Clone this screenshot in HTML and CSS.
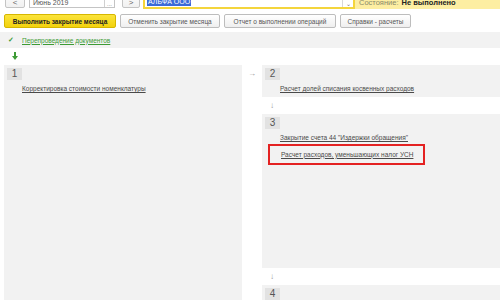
FILE: index.html
```html
<!DOCTYPE html>
<html lang="ru">
<head>
<meta charset="utf-8">
<link rel="stylesheet" href="styles.css">
</head>
<body>
<div class="top">
  <div class="navbtn prev">&lt;</div>
  <div class="field date"><span class="val">Июнь 2019</span><div class="dots">...</div></div>
  <div class="navbtn next">&gt;</div>
  <div class="org"><span class="sel">АЛЬФА ООО</span><div class="dd">⌄</div></div>
  <div class="state"><span class="lbl">Состояние:</span> <b>Не выполнено</b></div>
</div>
<div class="actions">
  <div class="btn primary">Выполнить закрытие месяца</div>
  <div class="btn w100">Отменить закрытие месяца</div>
  <div class="btn w112">Отчет о выполнении операций</div>
  <div class="btn w71">Справки - расчеты</div>
</div>
<div class="band">
  <span class="check">✓</span>
  <a class="glink">Перепроведение документов</a>
</div>
<div class="garrow">
  <svg width="6" height="8" viewBox="0 0 6 8"><path d="M2 0h2v4h2L3 8 0 4h2z" fill="#3d9b35"/></svg>
</div>
<div class="main">
  <div class="step left">
    <div class="badge">1</div>
    <a class="link">Корректировка стоимости номенклатуры</a>
  </div>
  <div class="harrow">→</div>
  <div class="col">
    <div class="step s2">
      <div class="badge">2</div>
      <a class="link">Расчет долей списания косвенных расходов</a>
    </div>
    <div class="varrow">↓</div>
    <div class="step s3">
      <div class="badge">3</div>
      <a class="link">Закрытие счета 44 "Издержки обращения"</a>
      <div class="mark"><a class="link">Расчет расходов, уменьшающих налог УСН</a></div>
    </div>
    <div class="varrow">↓</div>
    <div class="step s4">
      <div class="badge">4</div>
    </div>
  </div>
</div>
</body>
</html>
```
FILE: styles.css
```css
html, body {
  margin: 0;
  padding: 0;
  background: #fff;
  height: 300px;
  overflow: hidden;
  font-family: "Liberation Sans", Arial, sans-serif;
  font-size: 6.5px;
  color: #4a4a4a;
}
.top {
  display: flex;
  height: 20px;
  margin-top: -11px;
}
.navbtn {
  box-sizing: border-box;
  height: 19px;
  border: 1px solid #c4c4c4;
  border-radius: 2px;
  background: linear-gradient(#fff, #f1f1f1);
  color: #666;
  font-size: 8px;
  display: flex;
  align-items: flex-end;
  justify-content: center;
  padding-bottom: 0;
}
.prev { margin-left: 5px; width: 20px; }
.next { margin-left: 7px; width: 18px; }
.field {
  box-sizing: border-box;
  height: 19px;
  border: 1px solid #c4c4c4;
  background: #fff;
  display: flex;
  align-items: flex-end;
}
.date { margin-left: 4px; width: 86px; }
.val { flex: 1; padding: 0 0 1px 3px; color: #555; font-size: 7px; }
.dots {
  width: 9px;
  height: 100%;
  border-left: 1px solid #d0d0d0;
  color: #777;
  text-align: center;
  display: flex;
  align-items: flex-end;
  justify-content: center;
  font-size: 6px;
}
.org {
  box-sizing: border-box;
  margin-left: 3px;
  width: 212px;
  height: 20px;
  border: 2px solid #f4d53c;
  background: #fff;
  display: flex;
  align-items: flex-end;
}
.sel {
  margin: 0 0 1px 2px;
  background: #3b6ad8;
  color: #fff;
  padding: 0 1px;
  line-height: 8px;
  font-size: 7px;
}
.dd {
  margin-left: auto;
  width: 10px;
  height: 100%;
  border-left: 1px solid #d8d8d8;
  color: #777;
  font-size: 6px;
  display: flex;
  align-items: flex-end;
  justify-content: center;
}
.state {
  flex: 1;
  height: 20px;
  background: #fdeea2;
  display: flex;
  align-items: flex-end;
  padding: 0 0 2px 4px;
  box-sizing: border-box;
  gap: 3px;
  font-size: 7.5px;
}
.lbl { color: #8a8a6a; }
.state b { color: #222; }
.actions {
  display: flex;
  gap: 4px;
  margin-top: 5px;
  padding-left: 4px;
}
.btn {
  box-sizing: border-box;
  height: 14px;
  border: 1px solid #bdbdbd;
  border-radius: 2px;
  background: linear-gradient(#fff, #efefef);
  color: #555;
  font-size: 6.5px;
  display: flex;
  align-items: center;
  justify-content: center;
  white-space: nowrap;
}
.primary {
  width: 112px;
  background: linear-gradient(#fbe43a, #f3d20d);
  border-color: #d6b700;
  color: #222;
  font-weight: bold;
}
.w100 { width: 100px; }
.w112 { width: 112px; }
.w71 { width: 71px; }
.band {
  margin-top: 4px;
  height: 16px;
  background: #f2f2f2;
  display: flex;
  align-items: center;
}
.check {
  margin-left: 8px;
  width: 14px;
  color: #3d9b35;
  font-size: 7px;
  font-weight: bold;
}
.glink {
  color: #3d9b35;
  text-decoration: underline;
}
.garrow {
  height: 17px;
  padding-left: 12px;
  display: flex;
  align-items: center;
}
.garrow svg { display: block; margin-top: -1px; }
.main {
  display: flex;
  padding-left: 4px;
  height: 235px;
}
.step {
  background: #f2f2f2;
  box-sizing: border-box;
  padding: 3px 0 0 3px;
}
.left { width: 238px; }
.badge {
  width: 15px;
  height: 12px;
  background: #e2e2e2;
  color: #555;
  font-size: 10px;
  line-height: 12px;
  text-align: center;
}
.link {
  display: block;
  margin: 5px 0 0 15px;
  line-height: 8px;
  color: #4a4a4a;
  text-decoration: underline;
  white-space: nowrap;
}
.harrow {
  width: 20px;
  text-align: center;
  color: #999;
  font-size: 8px;
  padding-top: 4px;
  box-sizing: border-box;
}
.col {
  flex: 1;
  display: flex;
  flex-direction: column;
}
.s2 { height: 32px; }
.varrow {
  height: 17px;
  line-height: 17px;
  padding-left: 8px;
  color: #999;
  font-size: 8px;
}
.s3 { height: 154px; }
.s4 { flex: 1; }
.mark {
  box-sizing: border-box;
  margin: 2px 0 0 3px;
  width: 157px;
  height: 21px;
  border: 2px solid #e42222;
  display: flex;
  align-items: center;
}
.mark .link { margin: 0 0 0 11px; }
```
